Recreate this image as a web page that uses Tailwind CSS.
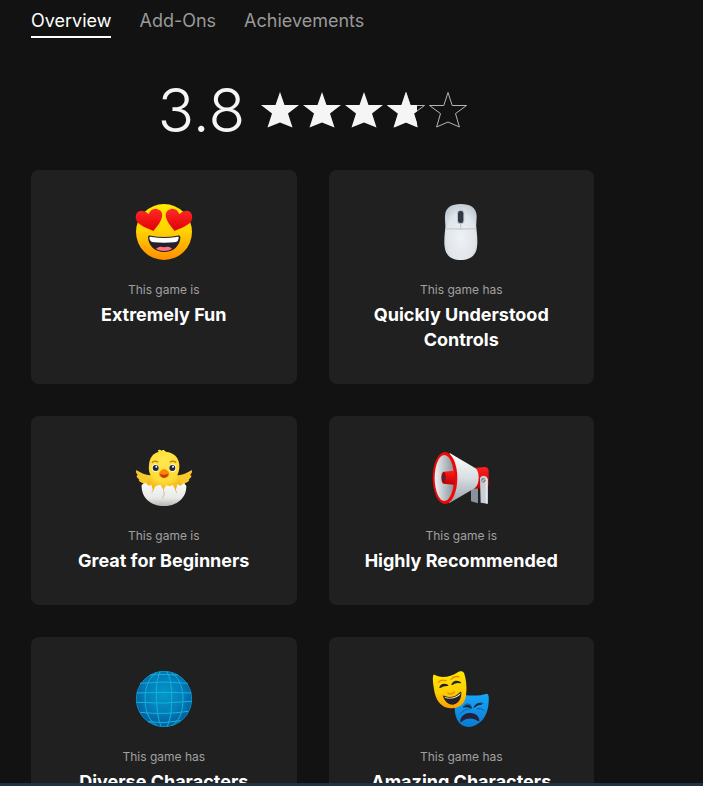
<!DOCTYPE html>
<html lang="en">
<head>
    <meta charset="UTF-8">
    <meta name="viewport" content="width=device-width, initial-scale=1.0">
    <title>Game Ratings</title>
    <script src="https://cdn.jsdelivr.net/npm/@tailwindcss/browser@4"></script>
</head>
<body class="flex h-screen flex-col overflow-hidden bg-[#121212] font-['Inter',sans-serif] text-[#f5f5f5]">
    <main class="min-h-0 flex-1 overflow-hidden pl-[31px] pr-[109px]">
        <nav class="flex gap-7 pt-2 text-lg leading-[26px]">
            <a href="#overview" class="border-b-2 border-white pb-[2px] text-white">Overview</a>
            <a href="#add-ons" class="text-[#999999]">Add-Ons</a>
            <a href="#achievements" class="text-[#999999]">Achievements</a>
        </nav>

        <section class="flex h-[132px] items-center justify-center gap-4 pt-3">
            <span class="text-[60px] font-light leading-none">3.8</span>
            <div class="flex gap-1" role="img" aria-label="3.8 out of 5 stars">
                <svg class="h-9 w-[38px]" viewBox="0 0 38 36"><use href="#star" fill="#f5f5f5"/></svg>
                <svg class="h-9 w-[38px]" viewBox="0 0 38 36"><use href="#star" fill="#f5f5f5"/></svg>
                <svg class="h-9 w-[38px]" viewBox="0 0 38 36"><use href="#star" fill="#f5f5f5"/></svg>
                <svg class="h-9 w-[38px]" viewBox="0 0 38 36">
                    <clipPath id="partial"><rect width="30" height="36"/></clipPath>
                    <use href="#starLine" fill="none" stroke="#b5b5b5"/>
                    <use href="#star" fill="#f5f5f5" clip-path="url(#partial)"/>
                </svg>
                <svg class="h-9 w-[38px]" viewBox="0 0 38 36"><use href="#starLine" fill="none" stroke="#b5b5b5"/></svg>
            </div>
        </section>

        <section class="grid grid-cols-2 gap-8 text-center">
            <article class="rounded-lg bg-[#202020] p-8">
                <!-- heart eyes -->
                <svg class="mx-auto size-[60px]" viewBox="30 24 180 180">
                    <defs>
                        <linearGradient id="face" x1="0" y1="0" x2="0" y2="1"><stop offset="0" stop-color="#ffec00"/><stop offset=".5" stop-color="#ffd000"/><stop offset="1" stop-color="#ff8f00"/></linearGradient>
                        <linearGradient id="heart" x1="0" y1="0" x2="0" y2="1"><stop offset="0" stop-color="#ff2a2a"/><stop offset="1" stop-color="#e00000"/></linearGradient>
                    </defs>
                    <circle cx="120" cy="114" r="84" fill="url(#face)"/>
                    <path d="M88 111C74 104 43 95 37 79C31 61 42 48 56 51C64 52 70 56 74 61C78 49 88 42 99 45C115 49 119 63 110 80C105 91 96 101 88 111Z" fill="url(#heart)"/>
                    <path d="M152 111C166 104 197 95 203 79C209 61 198 48 184 51C176 52 170 56 166 61C162 49 152 42 141 45C125 49 121 63 130 80C135 91 144 101 152 111Z" fill="url(#heart)"/>
                    <path d="M72 130C72 124 76 124 81 125C106 130 134 130 159 125C165 124 169 124 169 131C168 155 148 174 120 174C92 174 73 155 72 130Z" fill="#24202c"/>
                    <path d="M76 131C76 127 80 128 84 129C107 133 134 133 157 129C162 128 165 128 164 133C162 142 158 145 150 145C131 147 109 147 90 145C82 145 77 140 76 131Z" fill="#fff"/>
                    <path d="M96 164C105 157 113 157 120 160C128 157 136 157 144 164C132 173 108 173 96 164Z" fill="#ff717f"/>
                </svg>
                <p class="mb-1 mt-5 text-xs text-[#a0a0a0]">This game is</p>
                <h2 class="text-lg font-bold leading-[25px] text-white">Extremely Fun</h2>
            </article>

            <article class="rounded-lg bg-[#202020] p-8">
                <!-- computer mouse -->
                <svg class="mx-auto size-[60px]" viewBox="31 24 180 180">
                    <radialGradient id="mouse" cx=".5" cy=".6" r=".65"><stop offset="0" stop-color="#eef1f5"/><stop offset=".65" stop-color="#e1e6eb"/><stop offset="1" stop-color="#bdc8ce"/></radialGradient>
                    <path d="M120 30C149 30 167 41 168 66C168 84 165 91 168 111C170 127 171 145 169 159C166 185 147 198 120 198C93 198 75 185 72 159C70 145 71 127 73 111C76 91 72 84 73 66C74 41 92 30 120 30Z" fill="url(#mouse)"/>
                    <path d="M74 104Q120 106 167 104M120 30V104" fill="none" stroke="#c2cfcf" stroke-width="4"/>
                    <rect x="109" y="48" width="22" height="42" rx="10" fill="#b9c3cb"/>
                    <rect x="112" y="51" width="16" height="36" rx="7" fill="#343846"/>
                </svg>
                <p class="mb-1 mt-5 text-xs text-[#a0a0a0]">This game has</p>
                <h2 class="text-lg font-bold leading-[25px] text-white">Quickly Understood Controls</h2>
            </article>

            <article class="rounded-lg bg-[#202020] p-8">
                <!-- hatching chick -->
                <svg class="mx-auto size-[60px]" viewBox="30 24 180 180">
                    <defs>
                        <radialGradient id="chick" cx=".5" cy=".3" r=".7"><stop offset="0" stop-color="#ffe94d"/><stop offset=".7" stop-color="#ffdb35"/><stop offset="1" stop-color="#f4b51b"/></radialGradient>
                        <linearGradient id="shell" x1="0" y1="0" x2="0" y2="1"><stop offset="0" stop-color="#fafafa"/><stop offset=".65" stop-color="#e9e9e7"/><stop offset="1" stop-color="#b7b7b2"/></linearGradient>
                    </defs>
                    <path d="M78 106C66 105 49 99 38 91C33 92 37 101 42 106C35 105 37 113 46 118C41 120 48 127 57 130L68 152H172L183 130C192 127 199 120 194 118C203 113 205 105 198 106C203 101 207 92 202 91C191 99 174 105 162 106Z" fill="#f8c92c"/>
                    <path d="M104 36C98 30 106 27 113 32C114 28 123 30 125 35C151 37 165 54 166 75C167 89 163 98 160 106C169 118 173 132 172 150H68C67 132 71 118 80 106C76 97 73 88 75 74C77 53 88 39 104 36Z" fill="url(#chick)"/>
                    <circle cx="94" cy="84" r="11" fill="#fff"/><circle cx="146" cy="84" r="11" fill="#fff"/>
                    <circle cx="95" cy="84" r="9" fill="#252638"/><circle cx="145" cy="84" r="9" fill="#252638"/>
                    <circle cx="97" cy="80" r="3" fill="#fff"/><circle cx="147" cy="80" r="3" fill="#fff"/>
                    <path d="M85 67Q93 60 101 66M139 66Q147 60 155 67" fill="none" stroke="#b97b13" stroke-width="4" stroke-linecap="round"/>
                    <path d="M105 101C108 93 113 88 120 87C128 88 133 93 136 101C134 110 129 114 120 114C111 114 107 110 105 101Z" fill="#ff8500"/>
                    <path d="M108 101Q120 107 133 101Q131 112 120 113Q110 112 108 101Z" fill="#bb3e13"/>
                    <path d="M53 134L64 129L75 137L82 134L87 154L94 139L103 136L109 134L118 149L127 136L137 139L147 135L155 152L160 133L170 137L180 130L187 137C188 174 158 198 120 198C80 198 51 173 53 134Z" fill="url(#shell)"/>
                    <path d="M118 148L121 162L115 176M87 151L83 158M155 151L158 159" fill="none" stroke="#b6aa8a" stroke-width="2"/>
                </svg>
                <p class="mb-1 mt-5 text-xs text-[#a0a0a0]">This game is</p>
                <h2 class="text-lg font-bold leading-[25px] text-white">Great for Beginners</h2>
            </article>

            <article class="rounded-lg bg-[#202020] p-8">
                <!-- megaphone -->
                <svg class="mx-auto size-[60px]" viewBox="31 24 180 180">
                    <defs>
                        <linearGradient id="horn" x1="0" y1="0" x2="0" y2="1"><stop offset="0" stop-color="#fff"/><stop offset=".5" stop-color="#d8dee2"/><stop offset="1" stop-color="#98a1a8"/></linearGradient>
                        <linearGradient id="bell" x1="0" y1="0" x2="1" y2="0"><stop offset="0" stop-color="#f0f3f5"/><stop offset="1" stop-color="#89939b"/></linearGradient>
                        <linearGradient id="redBody" x1="0" y1="0" x2="0" y2="1"><stop offset="0" stop-color="#ff2020"/><stop offset="1" stop-color="#c00000"/></linearGradient>
                    </defs>
                    <path d="M151 143H172V190L151 184Z" fill="#89929b"/>
                    <path d="M160 84L194 81Q203 83 204 93V133Q202 144 190 145L160 146Z" fill="url(#redBody)"/>
                    <path d="M87 39L162 83Q174 91 174 112Q174 135 163 144L85 190Z" fill="url(#horn)"/>
                    <ellipse cx="73" cy="114" rx="37" ry="78" fill="#ed0909"/>
                    <ellipse cx="71" cy="114" rx="29" ry="69" fill="url(#bell)"/>
                    <path d="M69 95L100 92Q107 113 100 134L69 131Z" fill="url(#redBody)"/>
                    <ellipse cx="69" cy="113" rx="7" ry="18" fill="#c30008"/>
                    <ellipse cx="69" cy="113" rx="4" ry="11" fill="#303646"/>
                    <path d="M178 115Q180 107 190 107Q200 109 201 119V191L180 188Z" fill="#c8ced4"/>
                    <path d="M195 110L201 117V191L195 190Z" fill="#e5e9ec"/>
                    <circle cx="188" cy="121" r="7" fill="#7e8991"/>
                    <path d="M184 124L192 118" stroke="#dce2e6" stroke-width="3"/>
                </svg>
                <p class="mb-1 mt-5 text-xs text-[#a0a0a0]">This game is</p>
                <h2 class="text-lg font-bold leading-[25px] text-white">Highly Recommended</h2>
            </article>

            <article class="rounded-lg bg-[#202020] p-8">
                <!-- globe -->
                <svg class="mx-auto size-[60px]" viewBox="30 27 180 180">
                    <radialGradient id="globe" cx=".5" cy=".42" r=".6"><stop offset="0" stop-color="#0598c9"/><stop offset=".55" stop-color="#047eb8"/><stop offset="1" stop-color="#06589a"/></radialGradient>
                    <circle cx="120" cy="117" r="83" fill="url(#globe)" stroke="#0590c6" stroke-width="3"/>
                    <g fill="none" stroke="#10b3df" stroke-width="3">
                        <path d="M109 34C98 55 96 84 98 119C99 154 103 181 112 200M128 34C140 54 143 82 143 118C143 153 139 180 129 200"/>
                        <path d="M98 37C69 57 61 91 64 130C66 162 79 184 97 196M144 38C169 58 177 87 177 119C177 153 167 181 145 197"/>
                        <path d="M78 45Q120 42 162 45M48 70Q120 62 191 70M38 99Q120 95 202 99M38 127Q120 133 203 124M49 157Q120 165 192 154M72 185Q120 192 170 182"/>
                    </g>
                </svg>
                <p class="mb-1 mt-5 text-xs text-[#a0a0a0]">This game has</p>
                <h2 class="text-lg font-bold leading-[25px] text-white">Diverse Characters</h2>
            </article>

            <article class="rounded-lg bg-[#202020] p-8">
                <!-- theatre masks -->
                <svg class="mx-auto size-[60px]" viewBox="31 27 180 180">
                    <defs>
                        <linearGradient id="comedy" x1="0" y1="0" x2="0" y2="1"><stop offset="0" stop-color="#ffe800"/><stop offset=".6" stop-color="#ffcb00"/><stop offset="1" stop-color="#f9a000"/></linearGradient>
                        <linearGradient id="tragedy" x1="0" y1="0" x2="0" y2="1"><stop offset="0" stop-color="#18a8fa"/><stop offset="1" stop-color="#087bd0"/></linearGradient>
                    </defs>
                    <path d="M111 99C130 108 175 110 198 101C205 102 205 113 204 126C203 151 193 178 174 190C158 201 144 205 128 197C109 188 101 165 102 134Z" fill="url(#tragedy)"/>
                    <path d="M132 134Q142 127 153 138M164 138Q175 124 188 130M119 161C128 150 140 146 152 146M190 151Q180 143 170 146" fill="none" stroke="#0b62a8" stroke-width="3" stroke-linecap="round"/>
                    <path d="M128 141Q143 129 153 143Q140 139 128 141ZM160 142Q167 127 183 132Q171 133 160 142Z" fill="#222338" stroke="#222338" stroke-width="3"/>
                    <path d="M119 181C122 165 137 157 151 159C164 160 174 167 176 181C177 187 170 182 165 179C152 173 138 174 127 182C121 187 118 187 119 181Z" fill="#24223a"/>
                    <path d="M38 45C43 43 48 48 53 49C73 54 94 47 109 38C117 33 126 32 130 39C137 58 140 88 135 112C130 137 111 146 89 145C64 143 49 125 43 102C39 85 34 54 38 45Z" fill="url(#comedy)"/>
                    <path d="M54 66Q62 57 76 62M91 58Q100 46 115 51M82 99Q91 106 101 96" fill="none" stroke="#e88b00" stroke-width="4" stroke-linecap="round"/>
                    <path d="M58 82Q64 69 81 76Q69 75 58 82ZM94 73Q103 58 119 68Q106 65 94 73Z" fill="#24202b" stroke="#24202b" stroke-width="4" stroke-linejoin="round"/>
                    <path d="M67 109C64 105 69 106 73 108C88 115 106 109 116 98C121 92 123 96 122 102C121 120 110 134 95 134C82 134 72 124 67 109Z" fill="#24202b"/>
                    <path d="M71 110C88 117 107 112 120 99Q120 104 115 107C101 116 86 118 73 113Z" fill="#fff2ae"/>
                </svg>
                <p class="mb-1 mt-5 text-xs text-[#a0a0a0]">This game has</p>
                <h2 class="text-lg font-bold leading-[25px] text-white">Amazing Characters</h2>
            </article>
        </section>
    </main>
    <footer class="h-[3px] shrink-0 bg-[#20323f]"></footer>

    <!-- shared star shapes -->
    <svg class="absolute size-0" aria-hidden="true">
        <defs>
            <path id="star" d="M19 0L23.5 13H38L27 21.5L31.5 35.5L19 30.5L6.5 35.5L11 21.5L0 13H14.5Z"/>
            <path id="starLine" d="M19 0.5L23.2 13.5H37.5L26.5 21.6L30.4 35L19 30L7.6 35L11.5 21.6L0.5 13.5H14.8Z"/>
        </defs>
    </svg>
</body>
</html>
